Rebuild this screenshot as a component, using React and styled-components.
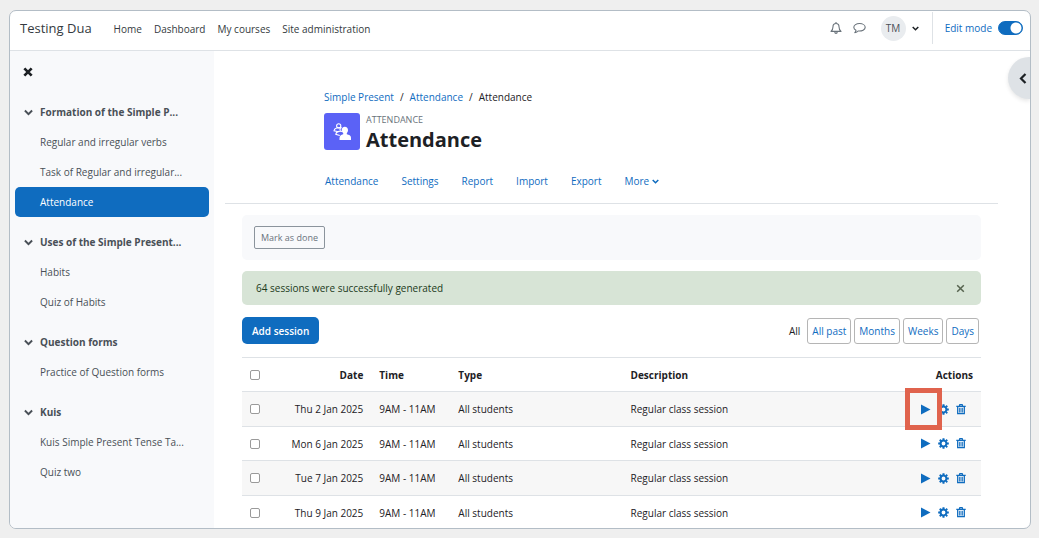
import React from 'react'
import styled, { createGlobalStyle, css } from 'styled-components'

const blue = '#0f6cbf'

const sections = [
	{
		title: 'Formation of the Simple P...',
		items: ['Regular and irregular verbs', 'Task of Regular and irregular...', 'Attendance'],
	},
	{
		title: 'Uses of the Simple Present...',
		items: ['Habits', 'Quiz of Habits'],
	},
	{
		title: 'Question forms',
		items: ['Practice of Question forms'],
	},
	{
		title: 'Kuis',
		items: ['Kuis Simple Present Tense Ta...', 'Quiz two'],
	},
]

const navLinks = ['Home', 'Dashboard', 'My courses', 'Site administration']
const tabs = ['Attendance', 'Settings', 'Report', 'Import', 'Export']
const ranges = ['All past', 'Months', 'Weeks', 'Days']
const dates = ['Thu 2 Jan 2025', 'Mon 6 Jan 2025', 'Tue 7 Jan 2025', 'Thu 9 Jan 2025']

const GlobalStyle = createGlobalStyle`
	* {
		box-sizing: border-box;
	}
	body {
		margin: 0;
		background-color: #efefef;
		color: #1d2125;
		font-family: 'Open Sans', 'Noto Sans', sans-serif;
		font-size: 10px;
		line-height: 16px;
	}
	a {
		color: ${blue};
		text-decoration: none;
	}
	button, input {
		font: inherit;
		margin: 0;
	}
	svg {
		display: block;
		flex: none;
	}
`

const Frame = styled.div`
	position: relative;
	display: flex;
	flex-direction: column;
	height: calc(100vh - 19px);
	margin: 10px 8px 9px 9px;
	border: 1px solid #b3bdc6;
	border-radius: 7px;
	background-color: #fff;
	overflow: hidden;
`

const Navbar = styled.header`
	display: flex;
	flex: none;
	align-items: center;
	height: 40px;
	padding: 0 7px 5px 10px;
	border-bottom: 1px solid #dee2e6;
`

const Brand = styled.a`
	margin-right: 22px;
	color: #343a40;
	font-size: 13px;
`

const NavLinks = styled.nav`
	display: flex;
	flex: 1;
	gap: 12px;
	padding-top: 1px;

	a {
		color: #343a40;
	}
`

const IconButton = styled.button`
	display: flex;
	padding: 0;
	border: 0;
	background: none;
	color: ${props => props.$color || '#6a737b'};
	cursor: pointer;
`

const Tools = styled.div`
	display: flex;
	align-items: center;
	gap: 11px;
	margin-right: 13px;
`

const UserMenu = styled(IconButton)`
	align-items: center;
	gap: 6px;
	margin-left: 4px;
`

const Initials = styled.span`
	width: 25px;
	height: 25px;
	border-radius: 50%;
	background-color: #e9ecef;
	color: #495057;
	line-height: 25px;
	text-align: center;
`

const EditMode = styled.label`
	display: flex;
	align-items: center;
	gap: 6px;
	height: 32px;
	padding-left: 12px;
	border-left: 1px solid #dee2e6;
	color: ${blue};
`

const Switch = styled.input`
	appearance: none;
	width: 25px;
	height: 14px;
	border: 1px solid ${blue};
	border-radius: 7px;
	background: radial-gradient(circle at 17px 6px, #fff 5px, ${blue} 6px);
`

const Body = styled.div`
	display: flex;
	flex: 1;
	min-height: 0;
`

const Drawer = styled.aside`
	flex: none;
	width: 204px;
	padding: 16px 5px 0;
	background-color: #f8f9fb;
`

const CloseDrawer = styled(IconButton)`
	margin: 0 0 20px 8px;
`

const Section = styled.section`
	margin-bottom: 10px;
`

const SectionHead = styled.button`
	display: flex;
	align-items: center;
	gap: 7px;
	width: 100%;
	height: 30px;
	padding: 0 9px;
	border: 0;
	background: none;
	color: #495057;
	font-weight: 700;
	white-space: nowrap;
	cursor: pointer;
`

const SectionItem = styled.a`
	display: flex;
	align-items: center;
	height: 30px;
	padding: 0 9px 0 25px;
	border-radius: 5px;
	color: #495057;
	white-space: nowrap;

	${props => props.$active && css`
		background-color: ${blue};
		color: #fff;
	`}
`

const Main = styled.main`
	flex: 1;
	min-width: 0;
`

const PageHeader = styled.div`
	margin: 0 32px 0 11px;
	padding: 38px 0 0 99px;
	border-bottom: 1px solid #dee2e6;
`

const Breadcrumb = styled.nav`
	display: flex;
	gap: 6px;
`

const ActivityHead = styled.div`
	display: flex;
	gap: 6px;
	margin-top: 8px;
`

const ActivityIcon = styled.div`
	display: flex;
	align-items: center;
	justify-content: center;
	width: 36px;
	height: 37px;
	border-radius: 3px;
	background-color: #5b62f6;
`

const Kind = styled.div`
	color: #6a737b;
	font-size: 9px;
	line-height: 13px;
`

const Title = styled.h1`
	margin: 0;
	font-size: 20px;
	font-weight: 700;
	line-height: 28px;
`

const Tabs = styled.nav`
	display: flex;
	gap: 23px;
	padding: 19px 0 14px 1px;

	a {
		display: flex;
		align-items: center;
		gap: 3px;
	}
`

const Content = styled.div`
	padding: 11px 49px 0 28px;
`

const Completion = styled.div`
	padding: 11px 12px;
	border-radius: 5px;
	background-color: #f8f9fb;
`

const DoneButton = styled.button`
	display: block;
	height: 23px;
	padding: 0 6px;
	border: 1px solid #8b949c;
	border-radius: 2px;
	background: none;
	color: #6a737b;
	font-size: 9px;
	cursor: pointer;
`

const Alert = styled.div`
	display: flex;
	align-items: center;
	justify-content: space-between;
	height: 34px;
	margin-top: 11px;
	padding: 0 16px 0 14px;
	border-radius: 5px;
	background-color: #d7e4d6;
	color: #1c3a1b;
`

const Controls = styled.div`
	display: flex;
	align-items: center;
	justify-content: space-between;
	margin: 12px 0 13px;
`

const AddButton = styled.button`
	height: 27px;
	padding: 0 10px;
	border: 0;
	border-radius: 5px;
	background-color: ${blue};
	color: #fff;
	font-weight: 600;
	cursor: pointer;
`

const Ranges = styled.div`
	display: flex;
	align-items: center;
	gap: 3px;
	padding-right: 2px;

	span {
		margin-right: 4px;
	}

	a {
		padding: 4px;
		border: 1px solid #b5b5b5;
		border-radius: 3px;
	}
`

const Table = styled.table`
	width: 100%;
	border-spacing: 0;
	table-layout: fixed;
`

const Row = styled.tr`
	height: ${props => (props.$striped ? 35 : 34)}px;
	background-color: ${props => (props.$striped ? '#f7f7f7' : '#fff')};
`

const cell = css`
	width: ${props => props.$width || 'auto'};
	padding: 0 8px;
	border-top: 1px solid #dee2e6;
	text-align: ${props => props.$align || 'left'};
	white-space: nowrap;
`

const Th = styled.th`
	${cell}
	font-weight: 700;
`

const Td = styled.td`
	${cell}
`

const Checkbox = styled.input`
	appearance: none;
	display: block;
	width: 10px;
	height: 10px;
	border: 1px solid #9a9a9a;
	border-radius: 2px;
	background-color: #fff;
`

const Actions = styled.div`
	position: relative;
	display: flex;
	justify-content: flex-end;
	gap: 7px;
	padding-right: 7px;
`

// red frame laid over the play button of the first session
const Highlight = styled.div`
	position: absolute;
	top: -16px;
	right: 31px;
	width: 37px;
	height: 42px;
	border: 5px solid #e0634d;
	pointer-events: none;
`

const DrawerTab = styled.button`
	position: absolute;
	top: 46px;
	right: 0;
	display: flex;
	align-items: center;
	width: 22px;
	height: 42px;
	padding: 0 0 0 11px;
	border: 0;
	border-radius: 21px 0 0 21px;
	background-color: #dee2e6;
	box-shadow: 0 2px 4px rgba(0, 0, 0, .1);
	color: #1d2125;
	cursor: pointer;
`

const ChevronDown = ({ size = 8 }) => (
	<svg width={size} height={size} viewBox="0 0 8 8" fill="none" stroke="currentColor" strokeWidth="1.7">
		<path d="M.8 2.200L4 5.400l3.200-3.200" />
	</svg>
)

const ChevronLeft = () => (
	<svg width="8" height="11" viewBox="0 0 8 11" fill="none" stroke="currentColor" strokeWidth="2.200">
		<path d="M6.500 1L2 5.500 6.500 10" />
	</svg>
)

const Cross = ({ size, weight }) => (
	<svg width={size} height={size} viewBox="0 0 9 9" fill="none" stroke="currentColor" strokeWidth={weight}>
		<path d="M1.200 1.200l6.600 6.600M7.800 1.200L1.200 7.800" />
	</svg>
)

const Bell = () => (
	<svg width="12" height="12" viewBox="0 0 12 12" fill="none" stroke="currentColor" strokeWidth="1.100">
		<path d="M6 0v1.500M6 1.500c-2 0-3 1.400-3 3.200C3 7 2.200 8.300 1 9.400h10C9.800 8.300 9 7 9 4.700c0-1.800-1-3.200-3-3.200z" strokeLinejoin="round" />
		<path d="M4.800 10c0 1.800 2.400 1.800 2.400 0" />
	</svg>
)

const Comment = () => (
	<svg width="13" height="12" viewBox="0 0 13 12" fill="none" stroke="currentColor" strokeWidth="1.100">
		<path d="M6.500 1.500C3.300 1.500.8 3.200.8 5.300c0 1.300.8 2.300 2.200 3 0 1-.6 1.800-1.200 2.400 1.500-.1 2.600-.7 3.300-1.700 4 .4 7.100-1.300 7.100-3.700 0-2.100-2.500-3.800-5.700-3.800z" strokeLinejoin="round" />
	</svg>
)

const Play = () => (
	<svg width="11" height="11" viewBox="0 0 11 11" fill="currentColor">
		<path d="M1 .5v10l9.500-5z" />
	</svg>
)

const Gear = () => (
	<svg width="11" height="11" viewBox="0 0 12 12" fill="none" stroke="currentColor">
		<circle cx="6" cy="6" r="3.200" strokeWidth="2.200" />
		<path strokeWidth="2.200" d="M6 .2v2M6 9.800v2M.2 6h2M9.800 6h2" />
		<path strokeWidth="2" d="M1.900 1.900l1.400 1.400M8.700 8.700l1.400 1.400M1.900 10.100l1.400-1.400M8.700 3.300l1.400-1.400" />
	</svg>
)

const Trash = () => (
	<svg width="10" height="11" viewBox="0 0 10 11" fill="none" stroke="currentColor">
		<path strokeWidth="1.200" d="M.3 2.300h9.400M3.300 2.200l.5-1.500h2.400l.5 1.500" />
		<path strokeWidth="1.300" d="M1.700 2.500v7.200h6.600V2.500" />
		<path strokeWidth=".9" d="M3.600 3.800v4.800M5 3.800v4.800M6.400 3.800v4.800" />
	</svg>
)

const AttendanceLogo = () => (
	<svg width="18" height="18" viewBox="0 0 18 18" fill="none" stroke="#fff" strokeWidth="1.100">
		<circle cx="5.700" cy="2.800" r="2.100" />
		<path d="M8.500 5C5 4.200 1.200 5 1 7.800l4.500 1" />
		<path d="M9 8.500c-3-.8-6 .2-6.200 2.800l4 1.200" />
		<path d="M7.500 7.800a2.300 2.300 0 0 1 1-3.600" />
		<path fill="#fff" stroke="none" d="M11.800 3.800c2 0 3.200 1.400 3.200 3.200 0 1.300-.5 2.300-1.200 3v1.200c2.200.5 4.200 1.200 4.200 3.600V17H6.500v-2c0-2 1.500-3 3.700-3.700V10c-.9-.7-1.500-1.700-1.500-3 0-1.800 1.200-3.200 3.100-3.200z" />
	</svg>
)

const App = () => (
	<>
		<GlobalStyle />
		<Frame>
			<Navbar>
				<Brand href="#">Testing Dua</Brand>
				<NavLinks>{
					navLinks.map(link => <a href="#" key={link}>{link}</a>)
				}</NavLinks>
				<Tools>
					<IconButton aria-label="Notifications"><Bell /></IconButton>
					<IconButton aria-label="Messages"><Comment /></IconButton>
					<UserMenu aria-label="User menu" $color="#1d2125">
						<Initials>TM</Initials>
						<ChevronDown size={7} />
					</UserMenu>
				</Tools>
				<EditMode>
					Edit mode
					<Switch type="checkbox" role="switch" defaultChecked />
				</EditMode>
			</Navbar>

			<Body>
				<Drawer>
					<CloseDrawer aria-label="Close course index" $color="#1d2125">
						<Cross size={10} weight={2.4} />
					</CloseDrawer>
					{sections.map(section => (
						<Section key={section.title}>
							<SectionHead>
								<ChevronDown size={9} />
								{section.title}
							</SectionHead>
							{section.items.map(item => (
								<SectionItem href="#" key={item} $active={item === 'Attendance'}>{item}</SectionItem>
							))}
						</Section>
					))}
				</Drawer>

				<Main>
					<PageHeader>
						<Breadcrumb>
							<a href="#">Simple Present</a>
							<span>/</span>
							<a href="#">Attendance</a>
							<span>/</span>
							<span>Attendance</span>
						</Breadcrumb>
						<ActivityHead>
							<ActivityIcon><AttendanceLogo /></ActivityIcon>
							<div>
								<Kind>ATTENDANCE</Kind>
								<Title>Attendance</Title>
							</div>
						</ActivityHead>
						<Tabs>
							{tabs.map(tab => <a href="#" key={tab}>{tab}</a>)}
							<a href="#">More <ChevronDown size={7} /></a>
						</Tabs>
					</PageHeader>

					<Content>
						<Completion>
							<DoneButton>Mark as done</DoneButton>
						</Completion>
						<Alert role="alert">
							64 sessions were successfully generated
							<IconButton aria-label="Dismiss" $color="#56634f"><Cross size={9} weight={1.5} /></IconButton>
						</Alert>
						<Controls>
							<AddButton>Add session</AddButton>
							<Ranges>
								<span>All</span>
								{ranges.map(range => <a href="#" key={range}>{range}</a>)}
							</Ranges>
						</Controls>
						<Table>
							<thead>
								<Row>
									<Th $width="4%"><Checkbox type="checkbox" aria-label="Select all" /></Th>
									<Th $width="13.5%" $align="right">Date</Th>
									<Th $width="10.7%">Time</Th>
									<Th $width="23.3%">Type</Th>
									<Th>Description</Th>
									<Th $width="12%" $align="right">Actions</Th>
								</Row>
							</thead>
							<tbody>{
								dates.map((date, i) => (
									<Row key={date} $striped={i % 2 === 0}>
										<Td><Checkbox type="checkbox" aria-label={`Select ${date}`} /></Td>
										<Td $align="right">{date}</Td>
										<Td>9AM - 11AM</Td>
										<Td>All students</Td>
										<Td>Regular class session</Td>
										<Td>
											<Actions>
												<IconButton aria-label="Take attendance" $color={blue}><Play /></IconButton>
												<IconButton aria-label="Edit session" $color={blue}><Gear /></IconButton>
												<IconButton aria-label="Delete session" $color={blue}><Trash /></IconButton>
												{i === 0 && <Highlight />}
											</Actions>
										</Td>
									</Row>
								))
							}</tbody>
						</Table>
					</Content>
				</Main>
			</Body>
			<DrawerTab aria-label="Open block drawer"><ChevronLeft /></DrawerTab>
		</Frame>
	</>
)

export default App
